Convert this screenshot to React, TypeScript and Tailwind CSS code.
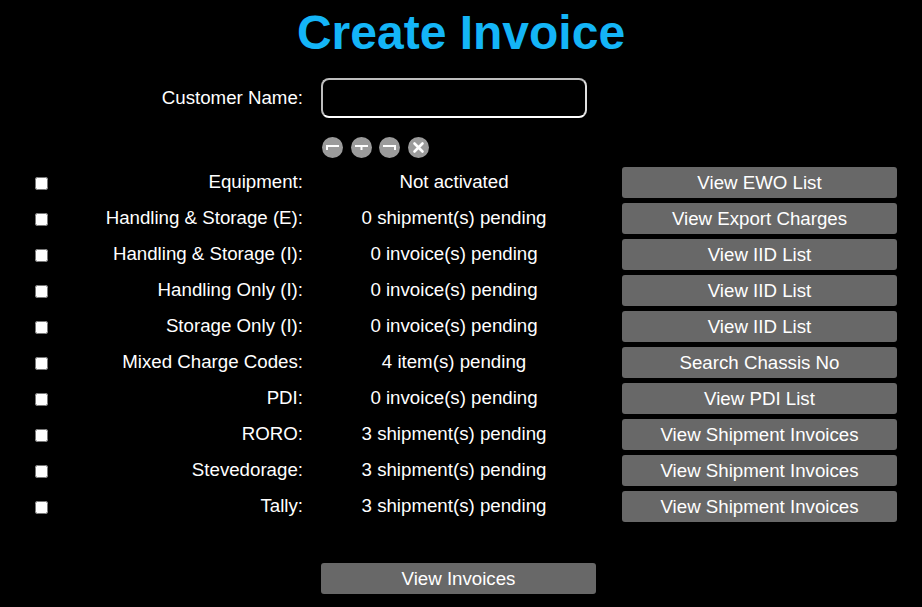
import React from "react";

const rows: [string, string, string][] = [
  ["Equipment:", "Not activated", "View EWO List"],
  ["Handling & Storage (E):", "0 shipment(s) pending", "View Export Charges"],
  ["Handling & Storage (I):", "0 invoice(s) pending", "View IID List"],
  ["Handling Only (I):", "0 invoice(s) pending", "View IID List"],
  ["Storage Only (I):", "0 invoice(s) pending", "View IID List"],
  ["Mixed Charge Codes:", "4 item(s) pending", "Search Chassis No"],
  ["PDI:", "0 invoice(s) pending", "View PDI List"],
  ["RORO:", "3 shipment(s) pending", "View Shipment Invoices"],
  ["Stevedorage:", "3 shipment(s) pending", "View Shipment Invoices"],
  ["Tally:", "3 shipment(s) pending", "View Shipment Invoices"],
];

function RoundIcon({ kind }: { kind: "left" | "center" | "right" | "x" }) {
  return (
    <svg width="21" height="21" viewBox="0 0 21 21">
      <circle cx="10.5" cy="10.5" r="10.5" fill="#9b9b9b" />
      {kind === "x" ? (
        <path d="M6.5 6.5 L14.5 14.5 M14.5 6.5 L6.5 14.5" stroke="#fff" strokeWidth="2.6" strokeLinecap="round" />
      ) : (
        <g fill="#fff">
          <rect x="4" y="8" width="13" height="2" />
          {kind === "left" && <rect x="4" y="10" width="2" height="3" />}
          {kind === "center" && <rect x="9.5" y="10" width="2" height="3" />}
          {kind === "right" && <rect x="15" y="10" width="2" height="3" />}
        </g>
      )}
    </svg>
  );
}

export default function App() {
  return (
    <div
      className="w-[922px] h-[607px] bg-black text-white overflow-hidden"
      style={{ fontFamily: '"Liberation Sans", Arial, sans-serif' }}
    >
      <h1 className="pt-[9px] text-center text-[48px] leading-[48px] font-bold text-[#14b5f7]">
        Create Invoice
      </h1>

      <div className="mt-[21px] flex items-center h-[40px]">
        <div className="w-[303px] text-right text-[18.7px]">Customer Name:</div>
        <input
          type="text"
          className="ml-[18px] w-[266px] h-[40px] rounded-[8px] border-2 border-[#bdbdbd] border-b-white border-r-[#e0e0e0] bg-black outline-none"
        />
      </div>

      <div className="mt-[19px] ml-[322px] flex gap-[7.5px] h-[21px]">
        <RoundIcon kind="left" />
        <RoundIcon kind="center" />
        <RoundIcon kind="right" />
        <RoundIcon kind="x" />
      </div>

      <div className="mt-[6px] flex flex-col">
        {rows.map(([label, status, btn], i) => (
          <div key={i} className="flex items-center h-[36px] text-[18.7px]">
            <div className="w-[82px] flex justify-center pt-[2px]">
              <input type="checkbox" className="w-[13px] h-[13px] m-0" />
            </div>
            <div className="w-[221px] text-right">{label}</div>
            <div className="ml-[18px] w-[266px] text-center">{status}</div>
            <button className="ml-[35px] w-[275px] h-[31px] rounded-[3px] bg-[#686868] text-white text-center leading-[31px]">
              {btn}
            </button>
          </div>
        ))}
      </div>

      <div className="mt-[39px] ml-[321px]">
        <button className="w-[275px] h-[31px] rounded-[3px] bg-[#686868] text-white text-[18.7px] leading-[31px]">
          View Invoices
        </button>
      </div>
    </div>
  );
}
